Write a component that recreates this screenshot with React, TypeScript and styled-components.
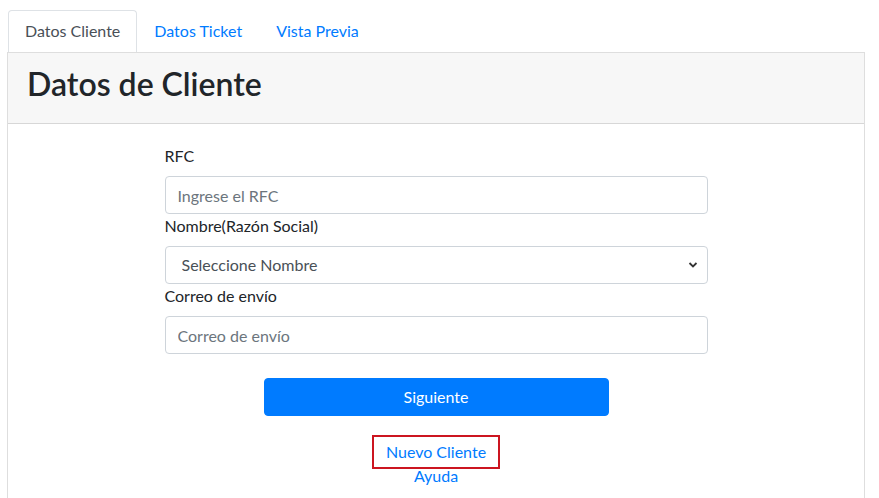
import React from "react";
import styled, { createGlobalStyle } from "styled-components";

const Global = createGlobalStyle`
  html, body { margin: 0; padding: 0; background: #fff; }
  body {
    font-family: Lato, "Noto Sans", "Liberation Sans", sans-serif;
    font-size: 16px;
    line-height: 1.5;
    color: #212529;
  }
  * { box-sizing: border-box; }
`;

const Page = styled.div`
  padding: 10px 0 0 7px;
  width: 865px;
`;

const Tabs = styled.ul`
  display: flex;
  list-style: none;
  margin: 0;
  padding: 0 0 0 1px;
`;

const Tab = styled.li<{ $active?: boolean }>`
  padding: 8px 16px;
  line-height: 24px;
  border: 1px solid ${(p) => (p.$active ? "#dee2e6" : "transparent")};
  border-bottom: none;
  border-radius: 4px 4px 0 0;
  color: ${(p) => (p.$active ? "#495057" : "#007bff")};
  background: #fff;
  height: 42px;
`;

const Card = styled.section`
  border: 1px solid rgba(0, 0, 0, 0.13);
  border-bottom: none;
  border-radius: 0 0 4px 4px;
`;

const CardHeader = styled.header`
  background: #f7f7f7;
  border-bottom: 1px solid rgba(0, 0, 0, 0.13);
  padding: 12px 20px;
`;

const Title = styled.h2`
  margin: 0 0 8px -1px;
  font-size: 32px;
  font-weight: 600;
  line-height: 1.2;
  color: #212529;
`;

const CardBody = styled.div`
  padding: 20px;
  display: flex;
  justify-content: center;
`;

const Form = styled.form`
  width: 543px;
  display: flex;
  flex-direction: column;
  align-items: stretch;
`;

const Label = styled.label`
  display: block;
  margin-bottom: 8px;
  line-height: 24px;
`;

const Input = styled.input`
  height: 38px;
  padding: 6px 12px;
  font: inherit;
  font-size: 16px;
  color: #495057;
  border: 1px solid #ced4da;
  border-radius: 4px;
  background: #fff;
  &::placeholder { color: #6c757d; }
`;

const SelectWrap = styled.div`
  position: relative;
`;

const Select = styled.select`
  width: 100%;
  height: 38px;
  padding: 6px 12px 6px 16px;
  font: inherit;
  font-size: 16px;
  color: #495057;
  border: 1px solid #ced4da;
  border-radius: 4px;
  background: #fff;
  appearance: none;
  -webkit-appearance: none;
`;

const Chevron = styled.svg`
  position: absolute;
  right: 10px;
  top: 15px;
  width: 10px;
  height: 8px;
  pointer-events: none;
`;

const Actions = styled.div`
  display: flex;
  flex-direction: column;
  align-items: center;
  margin-top: 24px;
`;

const Primary = styled.button`
  width: 345px;
  height: 38px;
  border: 1px solid #007bff;
  background: #007bff;
  color: #fff;
  font: inherit;
  font-size: 16px;
  border-radius: 4px;
`;

const Links = styled.div`
  display: flex;
  flex-direction: column;
  align-items: center;
  margin-top: 24px;
`;

const LinkText = styled.a<{ $marked?: boolean }>`
  color: #007bff;
  text-decoration: none;
  line-height: 24px;
  padding: 0 ${(p) => (p.$marked ? "9px" : "0")};
  outline: ${(p) => (p.$marked ? "2px solid #cc1520" : "none")};
  outline-offset: 3px;
`;

export default function App() {
  return (
    <>
      <Global />
      <Page>
        <Tabs>
          <Tab $active>Datos Cliente</Tab>
          <Tab>Datos Ticket</Tab>
          <Tab>Vista Previa</Tab>
        </Tabs>
        <Card>
          <CardHeader>
            <Title>Datos de Cliente</Title>
          </CardHeader>
          <CardBody>
            <Form onSubmit={(e) => e.preventDefault()}>
              <Label>RFC</Label>
              <Input placeholder="Ingrese el RFC" />
              <Label>Nombre(Razón Social)</Label>
              <SelectWrap>
                <Select defaultValue="">
                  <option value="">Seleccione Nombre</option>
                </Select>
                <Chevron viewBox="0 0 10 8">
                  <path d="M1.5 2l3.5 3.5L8.5 2" fill="none" stroke="#333" strokeWidth="1.8" />
                </Chevron>
              </SelectWrap>
              <Label>Correo de envío</Label>
              <Input placeholder="Correo de envío" />
              <Actions>
                <Primary type="button">Siguiente</Primary>
              </Actions>
              <Links>
                <LinkText href="#" $marked>Nuevo Cliente</LinkText>
                <LinkText href="#">Ayuda</LinkText>
              </Links>
            </Form>
          </CardBody>
        </Card>
      </Page>
    </>
  );
}
